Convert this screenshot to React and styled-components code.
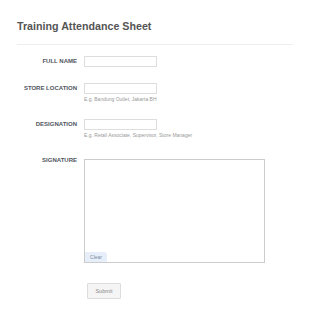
import styled, { createGlobalStyle } from "styled-components";

const GlobalStyle = createGlobalStyle`
  html, body {
    margin: 0;
    padding: 0;
    background: #ffffff;
  }
  body {
    font-family: "Liberation Sans", Arial, sans-serif;
  }
`;

function App() {
  return (
    <>
      <GlobalStyle />
      <Page>
        <Title>Training Attendance Sheet</Title>
        <Divider />
        <Form>
          <Row>
            <Label>FULL NAME</Label>
            <Field>
              <TextInput type="text" />
            </Field>
          </Row>
          <Row>
            <Label>STORE LOCATION</Label>
            <Field>
              <TextInput type="text" />
              <Hint>E.g. Bandung Outlet, Jakarta BH</Hint>
            </Field>
          </Row>
          <Row>
            <Label>DESIGNATION</Label>
            <Field>
              <TextInput type="text" />
              <Hint>E.g. Retail Associate, Supervisor, Store Manager</Hint>
            </Field>
          </Row>
          <Row>
            <Label>SIGNATURE</Label>
            <Field>
              <SignaturePad>
                <ClearButton type="button">Clear</ClearButton>
              </SignaturePad>
            </Field>
          </Row>
          <Row $top={4}>
            <Label />
            <Field>
              <SubmitButton type="button">Submit</SubmitButton>
            </Field>
          </Row>
        </Form>
      </Page>
    </>
  );
}

export default App;

const Page = styled.div`
  width: 310px;
  height: 317px;
  box-sizing: border-box;
  padding: 20px 17px 0 17px;
`;

const Title = styled.div`
  font-size: 10.7px;
  line-height: 12px;
  font-weight: bold;
  color: #555555;
`;

const Divider = styled.div`
  height: 1px;
  background: #eeeeee;
  margin-top: 12px;
`;

const Form = styled.div`
  display: flex;
  flex-direction: column;
  gap: 16px;
  padding-top: 11px;
`;

const Row = styled.div`
  display: flex;
  align-items: flex-start;
  gap: 7px;
  margin-top: ${(p) => p.$top || 0}px;
`;

const Label = styled.div`
  width: 60px;
  flex-shrink: 0;
  text-align: right;
  font-size: 6px;
  line-height: 11px;
  font-weight: bold;
  color: #505560;
  white-space: nowrap;
`;

const Field = styled.div`
  display: flex;
  flex-direction: column;
  align-items: flex-start;
`;

const TextInput = styled.input`
  width: 73px;
  height: 11px;
  box-sizing: border-box;
  border: 1px solid #dddddd;
  border-radius: 0;
  padding: 0;
  margin: 0;
  background: #ffffff;
  outline: none;
`;

const Hint = styled.div`
  margin-top: 2px;
  font-size: 5px;
  line-height: 7px;
  color: #999999;
  white-space: nowrap;
`;

const SignaturePad = styled.div`
  position: relative;
  width: 181px;
  height: 104px;
  box-sizing: border-box;
  border: 1px solid #cccccc;
  margin-top: 4px;
  background: #ffffff;
`;

const ClearButton = styled.button`
  position: absolute;
  left: 0;
  bottom: 0;
  width: 22px;
  height: 10px;
  padding: 0;
  border: none;
  border-top-right-radius: 3px;
  background: #e6eefa;
  color: #7d8ba0;
  font-family: "Liberation Sans", Arial, sans-serif;
  font-size: 5px;
  line-height: 10px;
  text-align: center;
`;

const SubmitButton = styled.button`
  margin-left: 3px;
  width: 34px;
  height: 16px;
  padding: 0;
  box-sizing: border-box;
  border: 1px solid #dddddd;
  border-radius: 1px;
  background: #f5f5f5;
  color: #888888;
  font-family: "Liberation Sans", Arial, sans-serif;
  font-size: 5.5px;
  line-height: 14px;
  text-align: center;
`;
